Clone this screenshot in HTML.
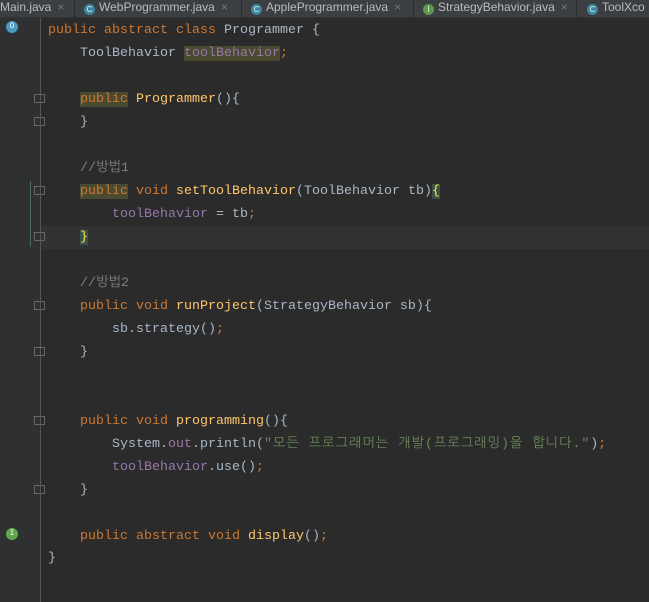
<html><head><style>
body{margin:0;width:649px;height:602px;background:#2b2b2b;overflow:hidden;position:relative;font-family:"Liberation Mono","NanumGothic",monospace;}
.tabs{position:absolute;left:0;top:0;width:649px;height:17px;background:#3c3f41;border-bottom:1px solid #323232;font-family:"Liberation Sans",sans-serif;font-size:12px;color:#bbb;}
.tab{position:absolute;top:0;height:17px;line-height:14px;white-space:nowrap;border-right:1px solid #2b2b2b;}
.ic{display:inline-block;width:11px;height:11px;border-radius:50%;background:#3e86a0;color:#dfe;font-size:8px;line-height:11px;text-align:center;vertical-align:-1px;margin-right:4px;}
.x{color:#777;margin-left:6px}
.gut{position:absolute;left:0;top:18px;width:40px;height:584px;background:#2f3031;border-right:1px solid #555;}
.hl{position:absolute;left:41px;top:226px;width:608px;height:23px;background:#323232;}
.l{position:absolute;left:48px;font-size:13.33px;line-height:23px;height:23px;white-space:pre;color:#a9b7c6;}
.k{color:#cc7832}.m{color:#ffc66d}.f{color:#9876aa}.s{color:#6a8759}.c{color:#808080}
.bg{background:#4a4a30}
.fold{position:absolute;left:34px;width:11px;height:9px;border:1px solid #666;box-sizing:border-box;}
</style></head><body>
<div class="tabs">
<div class="tab" style="left:0;width:74px">Main.java<span class="x">×</span></div>
<div class="tab" style="left:84px;width:157px"><span class="ic">C</span>WebProgrammer.java<span class="x">×</span></div>
<div class="tab" style="left:251px;width:162px"><span class="ic">C</span>AppleProgrammer.java<span class="x">×</span></div>
<div class="tab" style="left:423px;width:153px"><span class="ic" style="background:#5e9a4a">I</span>StrategyBehavior.java<span class="x">×</span></div>
<div class="tab" style="left:587px;width:80px"><span class="ic">C</span>ToolXco</div>
</div>
<div class="gut"></div>
<div class="hl"></div>
<div style="position:absolute;left:6px;top:21px;width:12px;height:12px;border-radius:50%;background:#4a9ac0;color:#fff;font-size:8px;text-align:center;line-height:12px">O</div>
<div style="position:absolute;left:6px;top:528px;width:12px;height:12px;border-radius:50%;background:#5ea84a;color:#fff;font-size:8px;text-align:center;line-height:12px">I</div>
<div class="fold" style="top:94px"></div><div class="fold" style="top:117px"></div>
<div class="fold" style="top:186px"></div><div class="fold" style="top:232px"></div>
<div class="fold" style="top:301px"></div><div class="fold" style="top:347px"></div>
<div class="fold" style="top:416px"></div><div class="fold" style="top:485px"></div>
<div style="position:absolute;left:30px;top:181px;width:1px;height:66px;background:#4a6a60"></div>
<div class="l" style="top:19px"><span class="k">public abstract class </span>Programmer {</div>
<div class="l" style="top:42px">    ToolBehavior <span class="f bg">toolBehavior</span><span class="k">;</span></div>
<div class="l" style="top:88px">    <span class="k bg">public</span> <span class="m">Programmer</span>(){</div>
<div class="l" style="top:111px">    }</div>
<div class="l" style="top:157px">    <span class="c">//방법1</span></div>
<div class="l" style="top:180px">    <span class="k bg">public</span><span class="k"> void </span><span class="m">setToolBehavior</span>(ToolBehavior tb)<span style="color:#ffef28;background:#3b514d">{</span></div>
<div class="l" style="top:203px">        <span class="f">toolBehavior</span> = tb<span class="k">;</span></div>
<div class="l" style="top:226px">    <span style="color:#ffef28;background:#3b514d">}</span></div>
<div class="l" style="top:272px">    <span class="c">//방법2</span></div>
<div class="l" style="top:295px">    <span class="k">public void </span><span class="m">runProject</span>(StrategyBehavior sb){</div>
<div class="l" style="top:318px">        sb.strategy()<span class="k">;</span></div>
<div class="l" style="top:341px">    }</div>
<div class="l" style="top:410px">    <span class="k">public void </span><span class="m">programming</span>(){</div>
<div class="l" style="top:433px">        System.<span class="f">out</span>.println(<span class="s" style="letter-spacing:0.9px">"모든 프로그래머는 개발(프로그래밍)을 합니다."</span>)<span class="k">;</span></div>
<div class="l" style="top:456px">        <span class="f">toolBehavior</span>.use()<span class="k">;</span></div>
<div class="l" style="top:479px">    }</div>
<div class="l" style="top:525px">    <span class="k">public abstract void </span><span class="m">display</span>()<span class="k">;</span></div>
<div class="l" style="top:547px">}</div>
</body></html>
